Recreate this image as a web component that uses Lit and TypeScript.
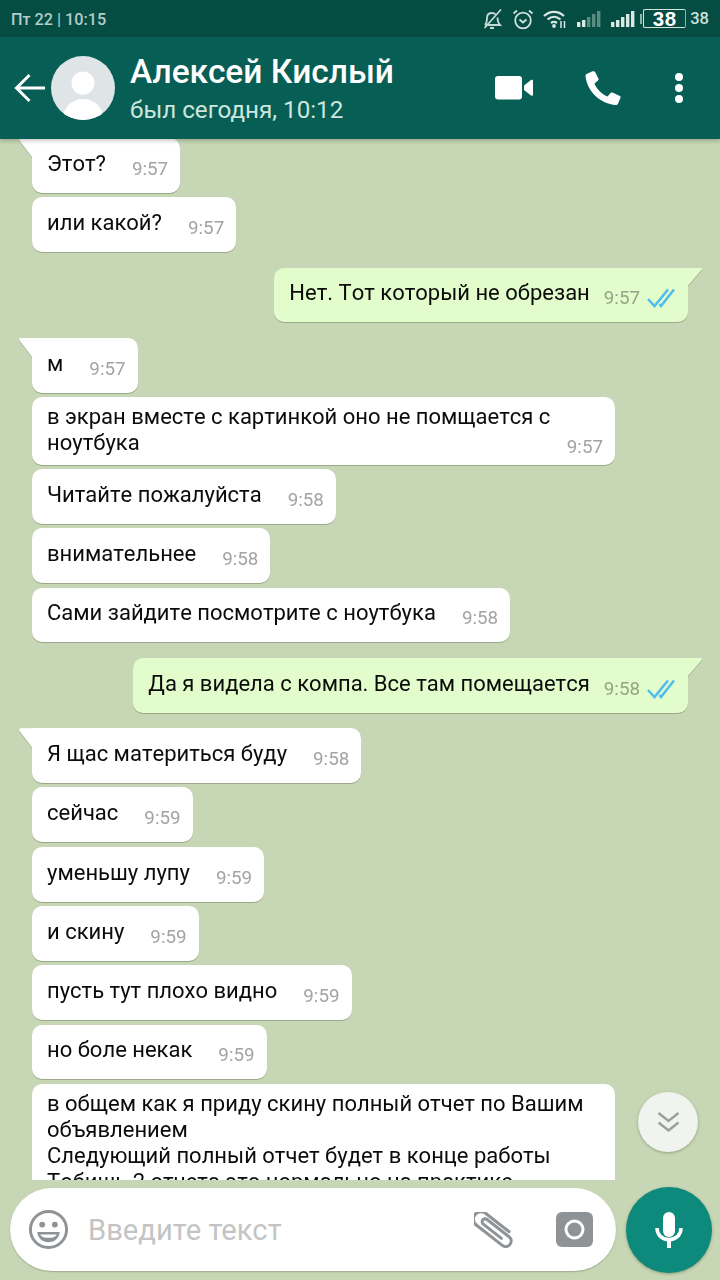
import { LitElement, html, css, svg } from "lit";
import { customElement } from "lit/decorators.js";

type Msg = { t: string; time: string; out?: boolean; tail?: boolean; gap?: boolean; multi?: boolean };

const msgs: Msg[] = [
  { t: "Этот?", time: "9:57", tail: true },
  { t: "или какой?", time: "9:57" },
  { t: "Нет. Тот который не обрезан", time: "9:57", out: true, tail: true, gap: true },
  { t: "м", time: "9:57", tail: true, gap: true },
  { t: "в экран вместе с картинкой оно не помщается с\nноутбука", time: "9:57", multi: true },
  { t: "Читайте пожалуйста", time: "9:58" },
  { t: "внимательнее", time: "9:58" },
  { t: "Сами зайдите посмотрите с ноутбука", time: "9:58" },
  { t: "Да я видела с компа. Все там помещается", time: "9:58", out: true, tail: true, gap: true },
  { t: "Я щас материться буду", time: "9:58", tail: true, gap: true },
  { t: "сейчас", time: "9:59" },
  { t: "уменьшу лупу", time: "9:59" },
  { t: "и скину", time: "9:59" },
  { t: "пусть тут плохо видно", time: "9:59" },
  { t: "но боле некак", time: "9:59" },
  {
    t: "в общем как я приду скину полный отчет по Вашим\nобъявлением\nСледующий полный отчет будет в конце работы\nТобишь 2 отчета это нормально на практике",
    time: "",
    multi: true,
  },
];

const bars = (dim: boolean) => svg`
  <rect x="0" y="11" width="3.4" height="5" fill="#dbe8e4"/>
  <rect x="5" y="9" width="3.4" height="7" fill="#dbe8e4"/>
  <rect x="10" y="6" width="3.4" height="10" fill="${dim ? "#5a8d82" : "#dbe8e4"}"/>
  <rect x="15" y="3" width="3.4" height="13" fill="${dim ? "#5a8d82" : "#dbe8e4"}"/>
  <rect x="20" y="0" width="3.4" height="16" fill="${dim ? "#5a8d82" : "#dbe8e4"}"/>
`;

@customElement("app-root")
export class AppRoot extends LitElement {
  static styles = css`
    :host {
      display: block;
      width: 720px;
      height: 1280px;
      font-family: Roboto, "Noto Sans", sans-serif;
      background: #c7d7b5;
      overflow: hidden;
    }
    .page {
      height: 1280px;
      display: flex;
      flex-direction: column;
    }
    .status {
      height: 37px;
      flex: none;
      background: #054c43;
      display: flex;
      align-items: center;
      padding: 0 11px;
      color: #b4cdc7;
      font-size: 16.2px;
      font-weight: 500;
    }
    .status .clock {
      flex: 1;
      margin-top: 1px;
    }
    .status .icons {
      display: flex;
      align-items: center;
    }
    .status svg {
      display: block;
    }
    .i-bell { margin-right: 9px; }
    .i-alarm { margin-right: 9px; }
    .i-wifi { margin-right: 10px; }
    .i-sig1 { margin-right: 10px; }
    .i-sig2 { margin-right: 5px; }
    .battery {
      display: flex;
      align-items: center;
      margin-right: 4px;
    }
    .battery .nub {
      width: 2px;
      height: 10px;
      background: #8fb2aa;
      margin-right: 1px;
    }
    .battery .cell {
      width: 43px;
      height: 19px;
      box-sizing: border-box;
      border: 1.5px solid #d5e4df;
      border-right-color: #8fb2aa;
      border-radius: 2px;
      display: flex;
      align-items: center;
      justify-content: center;
      font-family: "Liberation Sans", sans-serif;
      font-size: 20.5px;
      font-weight: 700;
      color: #fff;
      letter-spacing: 0.5px;
    }
    .pct {
      font-size: 16.5px;
      color: #cfe0db;
    }
    .header {
      height: 102px;
      flex: none;
      background: #075e54;
      display: flex;
      align-items: center;
      box-shadow: 0 2px 4px rgba(0, 0, 0, 0.22);
      position: relative;
      z-index: 2;
      color: #fff;
    }
    .back {
      margin-left: 14px;
      display: block;
    }
    .avatar {
      margin-left: 5px;
      display: block;
      flex: none;
    }
    .who {
      margin-left: 15px;
      flex: 1;
      display: flex;
      flex-direction: column;
      margin-top: 1px;
    }
    .name {
      font-size: 33.5px;
      font-weight: 500;
      line-height: 38px;
    }
    .seen {
      font-size: 24.2px;
      line-height: 30px;
      color: #cde6df;
      margin-top: 4px;
    }
    .hicons {
      display: flex;
      align-items: center;
      padding-right: 36px;
    }
    .hicons svg {
      display: block;
    }
    .hicons .call {
      margin-left: 52px;
    }
    .hicons .more {
      margin-left: 53px;
    }
    .chat {
      flex: 1;
      min-height: 0;
      position: relative;
      overflow: hidden;
    }
    .list {
      display: flex;
      flex-direction: column;
      align-items: flex-start;
      gap: 4.4px;
      padding: 0 32px;
      margin-top: -1px;
    }
    .bubble {
      position: relative;
      flex: none;
      box-sizing: border-box;
      display: flex;
      align-items: flex-end;
      column-gap: 26px;
      background: #fff;
      border-radius: 10px;
      padding: 13px 12px 16px 15px;
      filter: drop-shadow(0 1px 0.7px rgba(60, 70, 40, 0.32));
      height: 54.9px;
    }
    .bubble.multi {
      height: auto;
      padding: 7px 12px 8.5px 15px;
      column-gap: 8px;
      width: 583px;
    }
    .bubble.gap {
      margin-top: 11px;
    }
    .bubble.out {
      align-self: flex-end;
      background: #e2fdcb;
      padding-right: 13px;
      column-gap: 14px;
    }
    .bubble.tail {
      border-top-left-radius: 0;
    }
    .bubble.out.tail {
      border-top-left-radius: 10px;
      border-top-right-radius: 0;
    }
    .bubble.tail::before {
      content: "";
      position: absolute;
      top: 0;
      left: -13px;
      width: 14px;
      height: 19px;
      background: #fff;
      clip-path: polygon(0 2px, 1px 0, 100% 0, 100% 100%, 92% 100%);
    }
    .bubble.out.tail::before {
      left: auto;
      right: -14px;
      width: 15px;
      height: 18px;
      background: #e2fdcb;
      clip-path: polygon(0 0, 96% 0, 100% 2px, 8% 100%, 0 100%);
    }
    .text {
      font-size: 22px;
      font-kerning: none;
      line-height: 26px;
      color: #0b0b0b;
      white-space: pre-line;
      flex: 1;
    }
    .meta {
      display: flex;
      align-items: center;
      flex: none;
      margin-bottom: -2px;
      font-size: 18.8px;
      line-height: 20px;
      color: #a3a3a3;
    }
    .multi .meta {
      margin-bottom: -1px;
    }
    .out .meta {
      color: #93a587;
    }
    .ticks {
      margin-left: 7px;
      display: block;
    }
    .scroll {
      position: absolute;
      left: 638px;
      top: 953px;
      width: 60px;
      height: 60px;
      border-radius: 50%;
      background: #f1f3ee;
      box-shadow: 0 1px 3px rgba(50, 60, 30, 0.35);
      display: flex;
      align-items: center;
      justify-content: center;
    }
    .composer {
      height: 100px;
      flex: none;
      display: flex;
      align-items: center;
      box-sizing: border-box;
      padding: 0 8px 0 10px;
      gap: 10px;
    }
    .pill {
      flex: 1;
      height: 83px;
      margin-top: -1px;
      background: #fff;
      border-radius: 42px;
      display: flex;
      align-items: center;
      padding: 0 23px 0 18px;
      box-shadow: 0 1px 1.5px rgba(60, 70, 40, 0.3);
    }
    .pill svg {
      display: block;
      flex: none;
    }
    .placeholder {
      flex: 1;
      margin-left: 19px;
      font-size: 29.2px;
      color: #c4c4c4;
    }
    .clip {
      margin-right: 42px;
    }
    .fab {
      width: 86px;
      height: 86px;
      flex: none;
      margin-top: -1px;
      border-radius: 50%;
      background: #0d8a7b;
      box-shadow: 0 1px 3px rgba(50, 60, 30, 0.4);
      display: flex;
      align-items: center;
      justify-content: center;
    }
  `;

  render() {
    return html`<div class="page">
      <div class="status">
        <div class="clock">Пт 22 | 10:15</div>
        <div class="icons">
          <svg class="i-bell" width="20" height="22" viewBox="0 0 20 22" fill="none" stroke="#c4d9d3" stroke-width="1.8">
            <path d="M2 17c2-2 2-4 2-7 0-3 2-5 5-5 1.500 0 2.700.5 3.500 1.500M14.500 9.500c0 3 .5 5.500 2.500 7.500H2M7 20h4M1.500 20 18 1.500"/>
          </svg>
          <svg class="i-alarm" width="22" height="22" viewBox="0 0 22 22" fill="none" stroke="#d0e1dc" stroke-width="1.8">
            <circle cx="11" cy="12.500" r="7.800"/>
            <path d="M7.500 11.500 11 14.500l3.500-3M1.500 5.500 5 2.500M20.500 5.500 17 2.500"/>
          </svg>
          <svg class="i-wifi" width="24" height="20" viewBox="0 0 24 20" fill="none" stroke="#d8e6e2" stroke-width="2.200">
            <path d="M1 7c6-5.500 14-5.500 20 0M4.500 10.500c4-3.500 9-3.500 13 0M8 14c2-1.500 4-1.500 6 0"/>
            <circle cx="11" cy="17" r="1.900" fill="#d8e6e2" stroke="none"/>
            <path d="M18 12v7M21.500 12v7" stroke-width="1.500"/>
          </svg>
          <svg class="i-sig1" width="24" height="16" viewBox="0 0 24 16">${bars(true)}</svg>
          <svg class="i-sig2" width="24" height="16" viewBox="0 0 24 16">${bars(false)}</svg>
          <div class="battery">
            <div class="nub"></div>
            <div class="cell">38</div>
          </div>
          <div class="pct">38</div>
        </div>
      </div>
      <div class="header">
        <svg class="back" width="32" height="30" viewBox="0 0 32 30" fill="none" stroke="#fff" stroke-width="3">
          <path d="M31 15H3M15.500 2 2.500 15l13 13"/>
        </svg>
        <svg class="avatar" width="64" height="64" viewBox="0 0 64 64">
          <defs>
            <clipPath id="av"><circle cx="32" cy="32" r="32"/></clipPath>
          </defs>
          <circle cx="32" cy="32" r="32" fill="#dfe4e7"/>
          <g clip-path="url(#av)" fill="#fff">
            <circle cx="32" cy="27" r="11.500"/>
            <ellipse cx="32" cy="62" rx="20" ry="19"/>
          </g>
        </svg>
        <div class="who">
          <div class="name">Алексей Кислый</div>
          <div class="seen">был сегодня, 10:12</div>
        </div>
        <div class="hicons">
          <svg width="38" height="24" viewBox="0 0 38 24" fill="#fff">
            <rect x="0" y="0" width="27" height="23.500" rx="3"/>
            <path d="M29 9.500 36 4c1-.6 2 0 2 1v13.500c0 1-1 1.600-2 1l-7-5.500z"/>
          </svg>
          <svg class="call" width="36" height="36" viewBox="0 0 36 36" fill="#fff">
            <path d="M7 1.500 1.500 4c-.8.5-1 1.200-1 2C2 21 15 34 31 35c.8 0 1.600-.4 2-1.200l2.500-6c.3-.8 0-1.500-.6-1.900l-7.500-3.300c-.7-.3-1.400-.2-1.900.4l-3 3.500C16.500 24 12 19.500 9.500 13.500l3.500-3c.6-.5.7-1.200.4-1.900L10 1.800C9.500 1 8 1 7 1.500z"/>
          </svg>
          <svg class="more" width="10" height="32" viewBox="0 0 10 32" fill="#fff">
            <circle cx="5" cy="5" r="4"/>
            <circle cx="5" cy="16" r="4"/>
            <circle cx="5" cy="27" r="4"/>
          </svg>
        </div>
      </div>
      <div class="chat">
        <div class="list">
          ${msgs.map(
            (m) => html`<div class="bubble ${m.out ? "out" : ""} ${m.tail ? "tail" : ""} ${m.gap ? "gap" : ""} ${m.multi ? "multi" : ""}">
              <div class="text">${m.t}</div>
              ${m.time
                ? html`<div class="meta">
                    ${m.time}
                    ${m.out
                      ? html`<svg class="ticks" width="28" height="20" viewBox="0 0 28 20" fill="none" stroke="#4fbcee" stroke-width="2.500">
                          <path d="M1 11l6.500 7L21 1.500M12.500 16 14 18 27 1.500"/>
                        </svg>`
                      : ""}
                  </div>`
                : ""}
            </div>`
          )}
        </div>
        <div class="scroll">
          <svg width="25" height="22" viewBox="0 0 25 22" fill="none" stroke="#9aa09a" stroke-width="2.500">
            <path d="M2.500 2l10 8 10-8M2.500 11.500l10 8 10-8"/>
          </svg>
        </div>
      </div>
      <div class="composer">
        <div class="pill">
          <svg width="41" height="41" viewBox="0 0 42 42">
            <circle cx="21" cy="21" r="18.500" fill="none" stroke="#8f9396" stroke-width="3"/>
            <circle cx="14.500" cy="16" r="3" fill="#8f9396"/>
            <circle cx="27.500" cy="16" r="3" fill="#8f9396"/>
            <path d="M9.500 23.500h23c-.5 6.500-5.500 10.500-11.500 10.500S10 30 9.500 23.500z" fill="#8f9396"/>
            <path d="M12.500 26h17c-1 2.500-4 3.500-8.500 3.500s-7.500-1-8.500-3.500z" fill="#fff"/>
          </svg>
          <div class="placeholder">Введите текст</div>
          <svg class="clip" width="40" height="36" viewBox="0 0 40 36" fill="none" stroke="#8f9396" stroke-width="3" stroke-linecap="round">
            <g transform="rotate(38 20 18)">
              <path d="M33 10H3a7.500 7.500 0 0 0 0 15H36a5.500 5.500 0 0 0 0-11H8a3 3 0 0 0 0 6H31"/>
            </g>
          </svg>
          <svg width="37" height="35" viewBox="0 0 37 35">
            <rect width="37" height="35" rx="6" fill="#8f9396"/>
            <circle cx="18.500" cy="17.500" r="10" fill="#fff"/>
            <circle cx="18.500" cy="17.500" r="7" fill="#8f9396"/>
          </svg>
        </div>
        <div class="fab">
          <svg width="28" height="36" viewBox="0 0 28 36" fill="none">
            <rect x="8" y="0" width="12" height="25" rx="6" fill="#fff"/>
            <path d="M2 16c0 7 5 11.500 12 11.500S26 23 26 16" stroke="#fff" stroke-width="3.500"/>
            <rect x="12" y="27" width="4" height="9" fill="#fff"/>
          </svg>
        </div>
      </div>
    </div>`;
  }
}
